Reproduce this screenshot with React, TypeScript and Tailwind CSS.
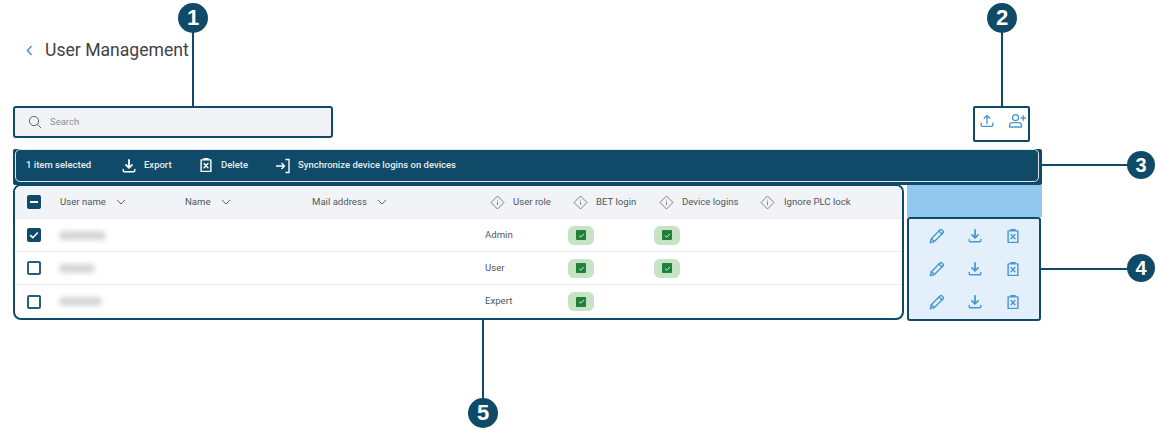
import type { ReactNode } from "react";

// Callouts on top of the screenshot: number bubble + leader line
function Bubble({ n, className }: { n: number; className: string }) {
  return (
    <div className={`absolute flex items-center justify-center rounded-full bg-[#0f4a68] font-['Liberation_Sans',sans-serif] font-bold leading-none text-white ${className}`}>
      {n}
    </div>
  );
}

function Ico({ size = 18, width = 1.4, children, className = "" }: { size?: number; width?: number; children: ReactNode; className?: string }) {
  return (
    <svg width={size} height={size} viewBox="0 0 18 18" fill="none" stroke="currentColor" strokeWidth={width} strokeLinecap="round" strokeLinejoin="round" className={`shrink-0 ${className}`}>
      {children}
    </svg>
  );
}

const DownloadIcon = (p: { size?: number; className?: string }) => (
  <Ico {...p} width={1.6}>
    <path d="M9 2v9M5.6 7.800 9 11.200l3.400-3.400" strokeWidth="2" />
    <path d="M2.500 13v1.200c0 .7.500 1.300 1.200 1.300h10.600c.7 0 1.200-.6 1.200-1.300V13" />
  </Ico>
);
const DeleteIcon = (p: { size?: number; className?: string }) => (
  <Ico {...p} width={1.600}>
    <path d="M3.500 3.200h11v13h-11zM6.500 1.800h5" />
    <path d="m6.800 7.400 4.400 4.600M11.200 7.400l-4.400 4.600" />
  </Ico>
);
const PencilIcon = (p: { size?: number; className?: string }) => (
  <Ico {...p} width={1.600}>
    <path d="M1.500 16.500 2.600 12 12.600 2c.5-.5 1.200-.5 1.700 0l1.600 1.600c.5.500.5 1.200 0 1.700L6 15.300z" />
    <path d="m2.600 12 3.400 3.300M11.200 3.400l3.400 3.400" />
  </Ico>
);
const InfoDiamond = () => (
  <svg width="15" height="15" viewBox="0 0 15 15" fill="none" stroke="#6f7780" strokeWidth="0.9" className="shrink-0">
    <path d="M7.500 1 14 7.500 7.500 14 1 7.500z" strokeLinejoin="round" />
    <path d="M7.500 6.800v3.200M7.500 4.800v.8" />
  </svg>
);
const Chevron = () => (
  <svg width="10" height="6" viewBox="0 0 10 6" fill="none" stroke="#5d656d" strokeWidth="1" className="ml-[10px] shrink-0">
    <path d="m1 1 4 4 4-4" />
  </svg>
);

function Green() {
  return (
    <span className="flex h-[19px] w-[26px] items-center justify-center rounded-[6px] bg-[#c6e3c6]">
      <span className="flex h-[10px] w-[10px] items-center justify-center rounded-[1px] bg-[#20803a]">
        <svg width="7" height="7" viewBox="0 0 7 7" fill="none" stroke="#dff1df" strokeWidth="1"><path d="m1 3.600 1.700 1.600L6 1.800" /></svg>
      </span>
    </span>
  );
}

function Box({ state }: { state: "on" | "off" | "some" }) {
  if (state === "off") return <span className="block h-[14px] w-[14px] rounded-[2px] border-2 border-[#2a5f7b] bg-white" />;
  return (
    <span className="flex h-[14px] w-[14px] items-center justify-center rounded-[2px] bg-[#0f4a68]">
      {state === "on" ? (
        <svg width="10" height="10" viewBox="0 0 10 10" fill="none" stroke="#fff" strokeWidth="1.600"><path d="m1.200 5.200 2.600 2.500 5-5.200" /></svg>
      ) : (
        <span className="h-[2px] w-[8px] bg-white" />
      )}
    </span>
  );
}

const COLS = "grid grid-cols-[45px_125px_127px_173px_83px_86px_106px_1fr] items-center";

const rows = [
  { blur: "w-[47px]", role: "Admin", on: "on" as const, dev: true },
  { blur: "w-[36px]", role: "User", on: "off" as const, dev: true },
  { blur: "w-[43px]", role: "Expert", on: "off" as const, dev: false },
];

export default function App() {
  return (
    <div className="relative h-[431px] w-[1158px] overflow-hidden bg-white font-['Roboto',sans-serif]">
      <div className="flex h-[106px] items-center pb-[5px] pl-[26px]">
        <svg width="7" height="11" viewBox="0 0 7 11" fill="none" stroke="#4a90c2" strokeWidth="1.400"><path d="M5.500 1 1.500 5.500l4 4.500" /></svg>
        <h1 className="ml-[12px] text-[17.6px] font-normal leading-none text-[#3c4248]">User Management</h1>
      </div>

      <div className="flex items-start justify-between pl-[13px] pr-[128px]">
        <div className="flex h-[32px] w-[320px] items-center gap-[8px] rounded-[3px] border-2 border-[#0f4a68] bg-[#f1f3f6] pl-[13px]">
          <svg width="14" height="14" viewBox="0 0 14 14" fill="none" stroke="#5d656d" strokeWidth="1"><circle cx="6" cy="6" r="4.600" /><path d="m9.400 9.400 3.600 3.600" /></svg>
          <span className="text-[9.5px] text-[#8a9097]">Search</span>
        </div>
        <div className="flex h-[36px] w-[57px] items-center rounded-[2px] border-2 border-[#0f4a68] pb-[6px] pl-[4px] text-[#4a97cf]">
          <Ico size={16} width={1.500}>
            <path d="M9 12V3M5.800 6 9 2.800 12.200 6" />
            <path d="M2.500 11.500v2c0 .8.600 1.500 1.400 1.500h10.200c.8 0 1.400-.7 1.400-1.500v-2" />
          </Ico>
          <Ico size={18} width={1.300} className="ml-[13px]">
            <circle cx="7.500" cy="5.600" r="3" />
            <path d="M1.500 15v-1.400c0-1.800 1.500-3 3-3h6c1.500 0 3 1.200 3 3V15z" />
            <path d="M13 6h4.500M15.250 3.700v4.600" />
          </Ico>
        </div>
      </div>

      <div className="ml-[13px] mt-[7px] h-[36px] w-[1029px] rounded-[2px] bg-[#0f4a68] pb-[3px] pl-[2px] pr-[3px]">
        <div className="flex h-full items-center rounded-[5px] border border-[#dfe7ec] pl-[10px] text-[9.5px] font-medium text-[#e6edf1]">
          <span className="w-[80px]">1 item selected</span>
          <DownloadIcon size={16} className="ml-[15px] text-white" />
          <span className="ml-[7px] w-[32px]">Export</span>
          <DeleteIcon size={16} className="ml-[22px] -translate-y-[1px] text-white" />
          <span className="ml-[7px] w-[33px]">Delete</span>
          <svg width="16" height="16" viewBox="0 0 16 16" fill="none" stroke="#fff" strokeWidth="1.400" className="ml-[21px] shrink-0">
            <path d="M1 8h8.500M6.500 5l3 3-3 3" />
            <path d="M10.500 1.500h3.500v13h-3.500" />
          </svg>
          <span className="ml-[7px]">Synchronize device logins on devices</span>
        </div>
      </div>

      <div className="ml-[13px] flex w-[1029px] items-start">
        <div className="-mt-[1px] w-[891px] overflow-hidden rounded-[8px] border-2 border-[#0f4a68] bg-white text-[9.6px] text-[#50575e]">
          <div className={`${COLS} h-[33px] border-b border-[#e9ecef] bg-[#f1f3f6]`}>
            <span className="pl-[12px]"><Box state="some" /></span>
            <span className="flex items-center">User name<Chevron /></span>
            <span className="flex items-center">Name<Chevron /></span>
            <span className="flex items-center">Mail address<Chevron /></span>
            <span className="flex items-center gap-[8px] pl-[5px]"><InfoDiamond />User role</span>
            <span className="flex items-center gap-[8px] pl-[5px]"><InfoDiamond />BET login</span>
            <span className="flex items-center gap-[8px] pl-[5px]"><InfoDiamond />Device logins</span>
            <span className="flex items-center gap-[9px]"><InfoDiamond />Ignore PLC lock</span>
          </div>
          {rows.map((r, i) => (
            <div key={r.role} className={`${COLS} h-[33px] ${i < 2 ? "border-b border-[#eceef0]" : ""}`}>
              <span className="pl-[12px]"><Box state={r.on} /></span>
              <span className={`-ml-[1px] block h-[9px] rounded-full bg-[#d4d6d8] blur-[2.5px] ${r.blur}`} />
              <span />
              <span />
              <span>{r.role}</span>
              <span><Green /></span>
              <span>{r.dev && <Green />}</span>
              <span />
            </div>
          ))}
        </div>

        <div className="ml-[3px] w-[135px]">
          <div className="h-[32px] bg-[#92c8ee]" />
          <div className="grid h-[104px] w-[134px] grid-rows-3 rounded-[3px] border-2 border-[#0f4a68] bg-[#e3f0fb] text-[#4a97cf]">
            {[0, 1, 2].map((i) => (
              <div key={i} className="flex items-center pl-[20px]">
                <PencilIcon size={16} />
                <DownloadIcon size={16} className="ml-[22px]" />
                <DeleteIcon size={16} className="ml-[22px]" />
              </div>
            ))}
          </div>
        </div>
      </div>

      {/* callouts */}
      <div className="absolute left-[192px] top-[30px] h-[77px] w-[2px] bg-[#0f4a68]" />
      <div className="absolute left-[1001px] top-[30px] h-[77px] w-[2px] bg-[#0f4a68]" />
      <div className="absolute left-[1042px] top-[164px] h-[2px] w-[85px] bg-[#0f4a68]" />
      <div className="absolute left-[1041px] top-[268px] h-[2px] w-[86px] bg-[#0f4a68]" />
      <div className="absolute left-[482px] top-[320px] h-[80px] w-[2px] bg-[#0f4a68]" />
      <Bubble n={1} className="left-[178px] top-[3px] h-[30px] w-[30px] text-[22px]" />
      <Bubble n={2} className="left-[987px] top-[3px] h-[30px] w-[30px] text-[22px]" />
      <Bubble n={3} className="left-[1127px] top-[151px] h-[28px] w-[28px] text-[20px]" />
      <Bubble n={4} className="left-[1127px] top-[254px] h-[28px] w-[28px] text-[20px]" />
      <Bubble n={5} className="left-[468px] top-[398px] h-[30px] w-[30px] text-[22px]" />
    </div>
  );
}
